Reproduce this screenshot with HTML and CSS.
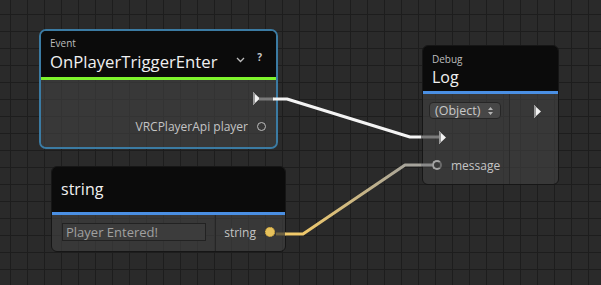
FILE: index.html
```html
<html>
<head>
    <link rel="stylesheet" href="styles.css">
</head>
<body>
<div class="canvas">
    <div class="node node-event">
        <div class="head">
            <div class="sub">Event</div>
            <div class="title-row">
                <span class="title title-long">OnPlayerTriggerEnter</span>
                <span class="head-icons">
                    <svg width="9" height="6" viewBox="0 0 9 6"><path d="M1 1 L4.5 4.5 L8 1" fill="none" stroke="#bdbdbd" stroke-width="1.3"/></svg>
                    <span class="help">?</span>
                </span>
            </div>
        </div>
        <div class="bar bar-green"></div>
        <div class="body">
            <div class="row row-right">
                <svg class="exec" width="7" height="13" viewBox="0 0 7 13"><path d="M0 0 L7 6.5 L0 13 Z" fill="#f2f2f2"/><path d="M0 0 L2 2 L2 11 L0 13 Z" fill="#9a9a9a"/></svg>
            </div>
            <div class="row row-right">
                <span class="label">VRCPlayerApi player</span>
                <span class="port port-empty"></span>
            </div>
        </div>
    </div>

    <div class="node node-string">
        <div class="head head-plain">
            <span class="title">string</span>
        </div>
        <div class="bar bar-blue"></div>
        <div class="body body-split">
            <div class="col col-input">
                <div class="textfield">Player Entered!</div>
            </div>
            <div class="col col-output">
                <span class="label">string</span>
                <span class="port port-yellow"></span>
            </div>
        </div>
    </div>

    <div class="node node-log">
        <div class="head">
            <div class="sub">Debug</div>
            <span class="title">Log</span>
        </div>
        <div class="bar bar-blue"></div>
        <div class="body body-split">
            <div class="col col-ins">
                <div class="dropdown">
                    <span>(Object)</span>
                    <svg width="5" height="8" viewBox="0 0 5 8"><path d="M2.5 0 L5 3 L0 3 Z M0 5 L5 5 L2.5 8 Z" fill="#b4b4b4"/></svg>
                </div>
                <div class="row row-exec">
                    <svg class="exec" width="7" height="13" viewBox="0 0 7 13"><path d="M0 0 L7 6.5 L0 13 Z" fill="#f2f2f2"/><path d="M0 0 L2 2 L2 11 L0 13 Z" fill="#9a9a9a"/></svg>
                </div>
                <div class="row row-msg">
                    <span class="port port-gray"></span>
                    <span class="label">message</span>
                </div>
            </div>
            <div class="col col-outs">
                <svg class="exec" width="7" height="13" viewBox="0 0 7 13"><path d="M0 0 L7 6.5 L0 13 Z" fill="#f2f2f2"/><path d="M0 0 L2 2 L2 11 L0 13 Z" fill="#9a9a9a"/></svg>
            </div>
        </div>
    </div>

    <svg class="wires" width="601" height="285" viewBox="0 0 601 285">
        <defs>
            <linearGradient id="strwire" gradientUnits="userSpaceOnUse" x1="300" y1="234" x2="410" y2="165">
                <stop offset="0" stop-color="#f0c96a"/>
                <stop offset="1" stop-color="#a6a49c"/>
            </linearGradient>
        </defs>
        <path d="M259 99 L274 99" stroke="#7a7a7a" stroke-width="3" fill="none"/>
        <path d="M273 99 L287 99 L410 137 L421 137" stroke="#f4f4f4" stroke-width="3" fill="none" stroke-linejoin="round"/>
        <path d="M421 137 L439 137" stroke="#7a7a7a" stroke-width="3" fill="none"/>
        <path d="M276 234 L286 234" stroke="#6e6242" stroke-width="3" fill="none"/>
        <path d="M285 234 L303 234 L405 165 L421 165" stroke="url(#strwire)" stroke-width="3" fill="none" stroke-linejoin="round"/>
        <path d="M421 165 L432 165" stroke="#8a8a8a" stroke-width="3" fill="none"/>
    </svg>
</div>
</body>
</html>
```

FILE: styles.css
```css
body {
    margin: 0;
    width: 601px;
    height: 285px;
    overflow: hidden;
    font-family: "Open Sans", "DejaVu Sans", sans-serif;
}

.canvas {
    position: relative;
    width: 601px;
    height: 285px;
    background-color: #2a2a2a;
    background-image:
        linear-gradient(to right, #1d1d1d 1px, transparent 1px),
        linear-gradient(to bottom, #1d1d1d 1px, transparent 1px);
    background-size: 17px 17px;
    background-position: 10px 14px;
}

.wires {
    position: absolute;
    left: 0;
    top: 0;
    pointer-events: none;
}

/* nodes sit on the graph canvas */
.node {
    position: absolute;
    display: flex;
    flex-direction: column;
    border: 1px solid #161616;
    border-radius: 6px;
    overflow: hidden;
    box-sizing: border-box;
}

.node-event {
    left: 39px;
    top: 29px;
    width: 239px;
    height: 120px;
    border: 2px solid #3b7ba3;
    border-radius: 7px;
}

.node-string {
    left: 51px;
    top: 166px;
    width: 235px;
    height: 86px;
}

.node-log {
    left: 422px;
    top: 45px;
    width: 137px;
    height: 140px;
}

.head {
    background: #0b0b0b;
    color: #ececec;
    padding: 7px 9px 0 9px;
    height: 45px;
    box-sizing: border-box;
}

.node-event .head {
    padding: 6px 9px 0 9px;
    height: 46px;
}

.head-plain {
    display: flex;
    align-items: center;
    padding-top: 0;
    padding-bottom: 2px;
}

.sub {
    font-size: 10px;
    line-height: 12px;
    color: #bdbdbd;
}

.title-row {
    display: flex;
    align-items: center;
    justify-content: space-between;
}

.title {
    font-size: 16px;
    line-height: 24px;
    color: #f0f0f0;
}

.title-long {
    font-size: 16.7px;
    line-height: 25px;
}

.head-icons {
    display: flex;
    align-items: center;
    gap: 12px;
    margin-right: 5px;
    margin-top: -4px;
}

.help {
    font-size: 10px;
    font-weight: bold;
    color: #c8c8c8;
    margin-top: -6px;
}

.bar {
    height: 3px;
    flex-shrink: 0;
}

.bar-green {
    background: #7ef42c;
}

.bar-blue {
    background: #4a8fe3;
}

.body {
    flex: 1;
    background: rgba(64, 64, 64, 0.62);
}

.node-event .body {
    padding-top: 6px;
}

.row {
    display: flex;
    align-items: center;
    height: 24px;
}

.row-right {
    justify-content: flex-end;
    padding-right: 10px;
}

.node-event .row + .row {
    margin-top: 4px;
}

.node-event .exec {
    margin-right: 6px;
}

.label {
    font-size: 12px;
    color: #c4c4c4;
}

.port {
    display: inline-block;
    box-sizing: border-box;
    width: 9px;
    height: 9px;
    border-radius: 50%;
}

.port-empty {
    border: 1.5px solid #bdbdbd;
    margin-left: 9px;
}

.port-yellow {
    background: #e7c25c;
    border: 1.5px dotted #b68d2e;
    margin-left: 9px;
    width: 10px;
    height: 10px;
}

.port-gray {
    background: #3a3a3a;
    border: 2.5px solid #a4a4a4;
    border-right-color: #6a6a6a;
    margin-right: 9px;
    width: 10px;
    height: 10px;
}

.body-split {
    display: flex;
}

.col-input {
    width: 164px;
    border-right: 1px solid #262626;
    padding: 8px 0 0 10px;
    box-sizing: border-box;
}

.textfield {
    width: 144px;
    height: 18px;
    box-sizing: border-box;
    background: #3c3c3c;
    border: 1px solid #222;
    color: #a0a0a0;
    font-size: 13px;
    line-height: 16px;
    padding-left: 3px;
}

.col-output {
    flex: 1;
    display: flex;
    align-items: center;
    justify-content: flex-end;
    padding-right: 10px;
    padding-bottom: 2px;
}

.col-ins {
    width: 87px;
    border-right: 1px solid #2a2a2a;
    padding: 8px 0 0 6px;
    box-sizing: border-box;
}

.col-ins .row {
    height: 28px;
}

.row-exec {
    padding-left: 10px;
}

.row-msg {
    padding-left: 3px;
}

.dropdown {
    width: 72px;
    height: 17px;
    box-sizing: border-box;
    background: #474747;
    border: 1px solid #262626;
    border-radius: 4px;
    color: #c8c8c8;
    font-size: 12.5px;
    line-height: 15px;
    padding: 0 7px 0 5px;
    display: flex;
    align-items: center;
    justify-content: space-between;
    margin-bottom: 4px;
}

.col-outs {
    flex: 1;
    display: flex;
    justify-content: center;
    align-items: flex-start;
    padding-top: 11px;
    padding-left: 6px;
}
```
